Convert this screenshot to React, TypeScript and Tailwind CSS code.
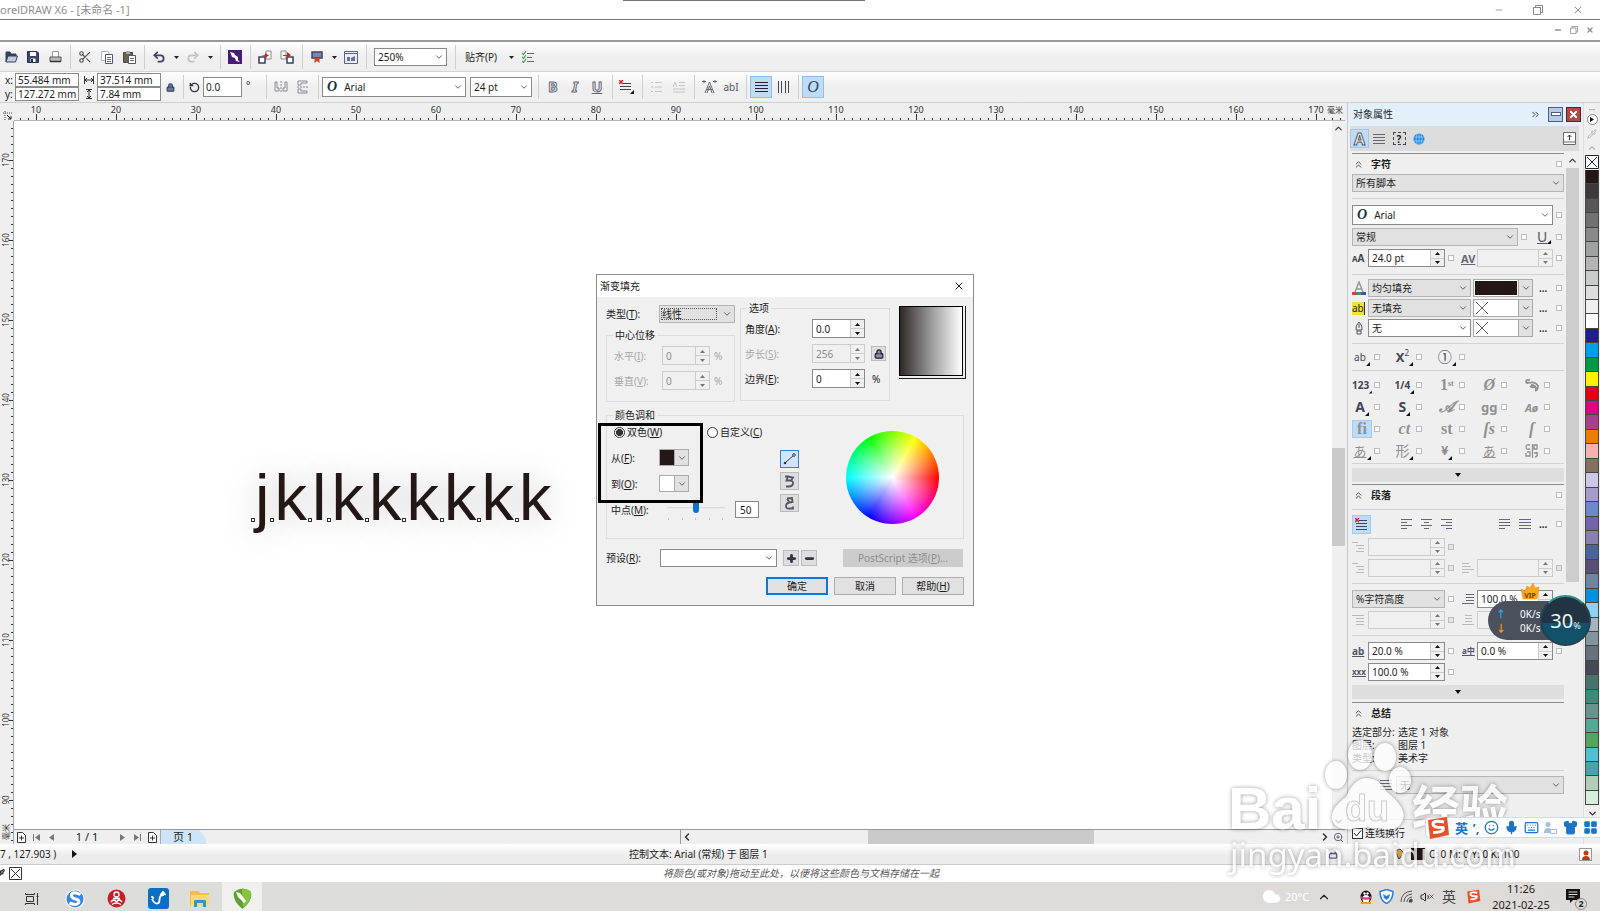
import type { ReactNode } from 'react'
import {
  ChevronDown,
  ChevronLeft,
  ChevronRight,
  ChevronUp,
  ChevronsRight,
  ChevronsUp,
  ClipboardPaste,
  Cloud,
  Copy,
  FolderOpen,
  Keyboard,
  LayoutGrid,
  Lock,
  Mic,
  Minus,
  Pipette,
  Plus,
  Printer,
  Redo2,
  RotateCcw,
  Save,
  Scissors,
  Shirt,
  Smile,
  Undo2,
  Volume1,
  Wifi,
  X,
  ZoomIn,
} from 'lucide-react'

const palette = [
  '#231815', '#3e3a39', '#595757', '#727171', '#898989', '#9fa0a0', '#b5b5b6', '#c9caca',
  '#dcdddd', '#efefef', '#ffffff', '#1d2088', '#00a0e9', '#009944', '#fff100', '#e60012',
  '#e4007f', '#a9408f', '#ed7d00', '#f5b0b0', '#84725f', '#cfc9e8', '#a59aca', '#6c8ac9',
  '#7464ac', '#8a80b0', '#4a6499', '#594f76', '#6f84a0', '#0091e0', '#8fd0f5', '#a3b3bf',
  '#84949e', '#66737e', '#474a56', '#49736c', '#3d8a76', '#68948d', '#52aa92', '#53a55f',
  '#53c0cf', '#48a3af', '#b3ccb8', '#d6efdb',
]

const inputBase = 'min-w-0 flex-1 bg-transparent px-[3px] outline-none'

function Sep() {
  return (
    <span className="flex h-6 w-2 shrink-0 justify-center">
      <span className="w-px bg-[#cfcfcf]" />
    </span>
  )
}

function Tool({ label, active, children }: { label: string; active?: boolean; children: ReactNode }) {
  return (
    <button
      type="button"
      aria-label={label}
      className={`flex h-[22px] w-[22px] shrink-0 items-center justify-center ${
        active ? 'border border-[#8fc0ea] bg-[#bfdcf5]' : ''
      }`}
    >
      {children}
    </button>
  )
}

function DropArrow() {
  return (
    <button type="button" aria-label="More" className="flex w-3 shrink-0 items-center justify-center">
      <svg width="5" height="3" viewBox="0 0 5 3">
        <path d="M0 0h5L2.5 3z" fill="#222" />
      </svg>
    </button>
  )
}

interface PickProps {
  label: string
  value: string
  className?: string
  white?: boolean
  focused?: boolean
  icon?: ReactNode
}

function Pick({ label, value, className = '', white, focused, icon }: PickProps) {
  return (
    <div
      className={`relative flex items-center border ${
        white ? 'border-[#8a8a8a] bg-white' : 'border-[#b4b4b4] bg-[#e1e1e1]'
      } ${className}`}
    >
      {icon}
      <select
        aria-label={label}
        defaultValue={value}
        className={`min-w-0 flex-1 appearance-none bg-transparent outline-none ${
          focused ? 'ml-px mr-[17px] h-3 border border-dotted border-[#555] leading-[10px]' : 'h-full pl-[3px] pr-3'
        }`}
      >
        <option>{value}</option>
      </select>
      <ChevronDown className="pointer-events-none absolute right-[2px] size-[10px] text-[#444]" strokeWidth={2} />
    </div>
  )
}

interface SpinProps {
  label: string
  value?: string
  disabled?: boolean
  className?: string
}

function Spin({ label, value = '', disabled, className = '' }: SpinProps) {
  return (
    <div
      className={`flex border ${
        disabled ? 'border-[#cccccc] bg-[#f0f0f0] text-[#8c8c8c]' : 'border-[#8a8a8a] bg-white text-[#222]'
      } ${className}`}
    >
      <input aria-label={label} defaultValue={value} disabled={disabled} className={inputBase} />
      <div className="flex w-[14px] flex-col border-l border-[#cccccc] bg-[#f0f0f0]">
        <button type="button" aria-label={`${label} +`} className="flex flex-1 items-center justify-center border-b border-[#cccccc]">
          <svg width="5" height="3" viewBox="0 0 5 3">
            <path d="M0 3h5L2.5 0z" fill={disabled ? '#777' : '#111'} />
          </svg>
        </button>
        <button type="button" aria-label={`${label} -`} className="flex flex-1 items-center justify-center">
          <svg width="5" height="3" viewBox="0 0 5 3">
            <path d="M0 0h5L2.5 3z" fill={disabled ? '#777' : '#111'} />
          </svg>
        </button>
      </div>
    </div>
  )
}

function Sq({ dim }: { dim?: boolean }) {
  return <span className={`size-[6px] shrink-0 border border-[#bdbdbd] ${dim ? 'bg-[#e4e4e4]' : 'bg-white'}`} />
}

function FontMark() {
  return <span className="ml-1 mr-1 font-['Liberation_Serif',serif] text-sm font-bold italic leading-none text-[#12333a]">O</span>
}

// stack of text lines, each one given as [start, end]
function Lines({ rows, color = '#66667a', width = 12 }: { rows: number[][]; color?: string; width?: number }) {
  return (
    <svg width={width} height="12" viewBox="0 0 12 12" shapeRendering="crispEdges">
      {rows.map(([a, b], i) => (
        <path key={i} d={`M${a} ${i * 3 + 1.5}H${b}`} stroke={color} strokeWidth="1" />
      ))}
    </svg>
  )
}

const full = [[0, 12], [0, 12], [0, 12], [0, 12]]
const indent = [[0, 6], [4, 12], [6, 12], [4, 12]]

function Corner() {
  return (
    <svg width="4" height="4" viewBox="0 0 4 4" className="self-end">
      <path d="M4 0v4H0z" fill="#111" />
    </svg>
  )
}

function TitleBars() {
  return (
    <header className="shrink-0 bg-white text-[#8f8f8f]">
      <div className="flex h-5 items-center justify-between border-b border-[#777]">
        <h1 className="text-[11px] leading-4">orelDRAW X6 - [未命名 -1]</h1>
        <div className="flex items-center gap-[29px] pr-4">
          <button type="button" aria-label="Minimize"><Minus className="size-[10px]" strokeWidth={2} /></button>
          <button type="button" aria-label="Restore"><RestoreGlyph size={10} /></button>
          <button type="button" aria-label="Close"><X className="size-3" strokeWidth={2} /></button>
        </div>
      </div>
      <div className="flex h-[22px] items-center justify-end gap-2 border-b-2 border-[#999] pr-[6px]">
        <button type="button" aria-label="Minimize document"><Minus className="size-2" strokeWidth={5} /></button>
        <button type="button" aria-label="Restore document"><RestoreGlyph size={8} /></button>
        <button type="button" aria-label="Close document"><X className="size-[8px]" strokeWidth={4} /></button>
      </div>
    </header>
  )
}

function RestoreGlyph({ size }: { size: number }) {
  return (
    <svg width={size} height={size} viewBox="0 0 10 10" fill="none" stroke="#888">
      <path d="M.5 2.500h7v7h-7zM2.500 2.500v-2h7v7h-2" />
    </svg>
  )
}

function StandardBar() {
  return (
    <div className="flex h-[30px] shrink-0 items-center border-b border-[#d4d4d4] bg-linear-to-b from-white to-[#efefef] to-50% pt-px">
      <Tool label="打开">
        <svg width="13" height="12" viewBox="0 0 13 12"><path d="M1 11V1h4l1 2h5v2" fill="#34405f" stroke="#34405f" /><path d="M1 11l2-6h9.500l-2 6z" fill="#c3cbdc" stroke="#34405f" /></svg>
      </Tool>
      <Tool label="保存">
        <svg width="12" height="12" viewBox="0 0 12 12"><path d="M.5.500h9.500l1.500 1.500v9.500H.5z" fill="#3d486e" stroke="#27304f" /><path d="M3 1h6v4H3zM3.500 7.500h5V11h-5z" fill="#fff" /><path d="M4 8h2v3H4z" fill="#27304f" /></svg>
      </Tool>
      <Tool label="打印">
        <svg width="13" height="12" viewBox="0 0 13 12"><path d="M3.500 6V.5h6V6" fill="#fff" stroke="#999" /><path d="M1 6h11v4.500H1z" fill="#bbb" stroke="#555" /><path d="M1 10.500h11" stroke="#333" strokeWidth="1.500" /></svg>
      </Tool>
      <Sep />
      <Tool label="剪切"><Scissors className="size-[14px] text-[#555]" /></Tool>
      <Tool label="复制">
        <svg width="12" height="13" viewBox="0 0 12 13"><path d="M.5.500h7v9h-7z" fill="#fff" stroke="#b4b8c2" /><path d="M4.500 3.500h7v9h-7z" fill="#fff" stroke="#556" /><path d="M6 6.500h4M6 8.500h4M6 10.500h4" stroke="#667" /></svg>
      </Tool>
      <Tool label="粘贴">
        <svg width="13" height="13" viewBox="0 0 13 13"><path d="M.5 1.500h9v10h-9z" fill="#6b6351" stroke="#4c463c" /><path d="M3 0h4v3H3z" fill="#aaa" /><path d="M5.500 4.500h7v8h-7z" fill="#fff" stroke="#556" /><path d="M7 7.500h4M7 9.500h4" stroke="#667" /></svg>
      </Tool>
      <Sep />
      <Tool label="撤消"><Undo2 className="size-[14px] text-[#3b4463]" strokeWidth={3} /></Tool>
      <DropArrow />
      <Tool label="重做"><Redo2 className="size-[14px] text-[#c4c4c8]" strokeWidth={3} /></Tool>
      <DropArrow />
      <Sep />
      <Tool label="搜索内容">
        <svg width="14" height="14" viewBox="0 0 14 14">
          <path d="M0 0h14v14H0z" fill="#4a1a78" />
          <path d="M2 2l4 1 1 2 3 2v3l2 2-4-1-1-3-3-1-1-3z" fill="#fff" />
        </svg>
      </Tool>
      <Sep />
      <Tool label="导入">
        <svg width="14" height="14" viewBox="0 0 14 14">
          <path d="M8 1h5v8H8z" fill="#fff" stroke="#888" />
          <path d="M1 7h6v6H1z" fill="#fff" stroke="#34405f" strokeWidth="1.5" />
          <path d="M3 5h4V3l4 2.5L7 8V6" fill="#c9251b" />
        </svg>
      </Tool>
      <Tool label="导出">
        <svg width="14" height="14" viewBox="0 0 14 14">
          <path d="M1 1h5v8H1z" fill="#fff" stroke="#888" />
          <path d="M7 7h6v6H7z" fill="#fff" stroke="#34405f" strokeWidth="1.5" />
          <path d="M3 5h4V2l4 3-4 3V6H3z" fill="#c9251b" />
        </svg>
      </Tool>
      <Sep />
      <Tool label="应用程序启动器">
        <svg width="12" height="13" viewBox="0 0 12 13">
          <path d="M1 1h10v6H1z" fill="#7b89a8" stroke="#3c4560" strokeWidth="1.5" />
          <path d="M3.500 7h5v5L6 10l-2.500 2z" fill="#e0401f" />
        </svg>
      </Tool>
      <DropArrow />
      <Tool label="欢迎屏幕">
        <svg width="14" height="13" viewBox="0 0 14 13">
          <path d="M.5.500h13v12H.5z" fill="#e9edf6" stroke="#5b6484" />
          <path d="M1 2.500h12" stroke="#5b6484" />
          <path d="M3 6h3v4H3zM7 7l4-2v5H7z" fill="#6471a3" />
        </svg>
      </Tool>
      <Sep />
      <Pick label="缩放级别" value="250%" white className="ml-1 h-[18px] w-[73px] shrink-0" />
      <span className="w-1" />
      <Sep />
      <button type="button" className="ml-[6px] mr-2 shrink-0">贴齐(P)</button>
      <DropArrow />
      <Tool label="选项">
        <svg width="12" height="12" viewBox="0 0 12 12" fill="none">
          <path d="M0 2l1.500 1.500L4 0M0 6l1.500 1.500L4 4M0 10l1.500 1.500L4 8" stroke="#4c9a4c" strokeWidth="1.200" />
          <path d="M5 2.500h7M5 6.500h5M5 10.500h7" stroke="#667" />
        </svg>
      </Tool>
    </div>
  )
}

function PropertyBar() {
  const field = 'h-[14px] w-16 border border-[#8a8a8a] bg-white px-[2px] outline-none'
  const outline = 'text-sm font-bold text-[#f5f5f5] [-webkit-text-stroke:1px_#667]'
  return (
    <div className="flex h-[31px] shrink-0 items-center border-b border-[#cfcfcf] bg-linear-to-b from-white to-[#efefef] to-50%">
      <div className="flex flex-col pl-[5px]">
        <label className="flex items-center"><span className="w-[10px]">x:</span><input defaultValue="55.484 mm" className={field} /></label>
        <label className="flex items-center"><span className="w-[10px]">y:</span><input defaultValue="127.272 mm" className={field} /></label>
      </div>
      <div className="ml-[5px] flex flex-col">
        <label className="flex items-center gap-[3px]">
          <svg width="10" height="8" viewBox="0 0 10 8" aria-label="宽度"><path d="M.5 0v8M9.500 0v8M1 4h8M3 2L1 4l2 2M7 2l2 2-2 2" fill="none" stroke="#334" /></svg>
          <input defaultValue="37.514 mm" className={field} />
        </label>
        <label className="flex items-center gap-[3px]">
          <svg width="10" height="10" viewBox="0 0 10 10" aria-label="高度"><path d="M2 .5h6M2 9.500h6M5 1v8M3 3l2-2 2 2M3 7l2 2 2-2" fill="none" stroke="#334" /></svg>
          <input defaultValue="7.84 mm" className={field} />
        </label>
      </div>
      <button type="button" aria-label="锁定比率" className="ml-[5px] mr-1"><Lock className="size-[9px] text-[#34405f]" fill="#6a769a" strokeWidth={3} /></button>
      <Sep />
      <label className="flex items-center gap-[3px] pl-[2px]">
        <RotateCcw className="size-[11px] text-[#334]" strokeWidth={3} />
        <input aria-label="旋转角度" defaultValue="0.0" className="h-5 w-[39px] border border-[#8a8a8a] bg-white px-[2px] outline-none" />
      </label>
      <span className="mb-1 ml-1 mr-[10px] w-[6px]">°</span>
      <Sep />
      <Tool label="水平镜像">
        <svg width="14" height="12" viewBox="0 0 14 12" fill="none" stroke="#889"><path d="M7 0v12" strokeDasharray="2 1" /><path d="M1 1v9h4V7H3V1zM13 1v9H9V7h2V1z" /></svg>
      </Tool>
      <Tool label="垂直镜像">
        <svg width="12" height="14" viewBox="0 0 12 14" fill="none" stroke="#889"><path d="M0 7h12" strokeDasharray="2 1" /><path d="M10 1H1v4h3V3h6zM10 13H1V9h3v2h6z" /></svg>
      </Tool>
      <Sep />
      <Pick label="字体列表" value="Arial" white icon={<FontMark />} className="h-5 w-36 shrink-0" />
      <Pick label="字体大小" value="24 pt" white className="ml-1 h-5 w-[62px] shrink-0" />
      <span className="w-[2px]" />
      <Sep />
      <Tool label="粗体"><span className={outline}>B</span></Tool>
      <Tool label="斜体"><span className={`${outline} italic`}>I</span></Tool>
      <Tool label="下划线"><span className={`${outline} underline`}>U</span></Tool>
      <Sep />
      <Tool label="文本对齐">
        <svg width="16" height="14" viewBox="0 0 16 14"><path d="M4 3.500h8M1 6.500h11M1 9.500h11" stroke="#445" /><path d="M0 0l4 4M4 0L0 4" stroke="#d22" strokeWidth="1.500" /><path d="M15 10v4h-4z" fill="#111" /></svg>
      </Tool>
      <Sep />
      <Tool label="项目符号列表">
        <svg width="12" height="12" viewBox="0 0 12 12" stroke="#c4c4c4"><path d="M0 1.500h2M0 6h2M0 10.500h2M4 1.500h7M4 6h7M4 10.500h7" /></svg>
      </Tool>
      <Tool label="首字下沉">
        <svg width="12" height="12" viewBox="0 0 12 12" stroke="#c4c4c4" fill="none"><path d="M0 6l2-5 2 5M6 1.500h6M6 4.500h6M0 8h12M0 11h12" /></svg>
      </Tool>
      <Sep />
      <Tool label="字符格式化">
        <svg width="15" height="14" viewBox="0 0 15 14" fill="none" stroke="#667"><path d="M3 13L7.500 2 12 13M4.500 9.500h6M5 13l2.500-7L10 13" /><path d="M0 1.500h4M11 1.500h4M2 0v3M13 0v3" /></svg>
      </Tool>
      <Tool label="编辑文本"><span className="text-[10px] text-[#556]">abI</span></Tool>
      <Sep />
      <Tool label="水平方向" active><svg width="13" height="12" viewBox="0 0 13 12" stroke="#223"><path d="M0 1.500h13M0 4.500h13M0 7.500h13M0 10.500h13" /></svg></Tool>
      <Tool label="垂直方向"><svg width="13" height="12" viewBox="0 0 13 12" stroke="#445"><path d="M1.500 0v12M4.500 0v12M8.500 0v12M11.500 0v12" /></svg></Tool>
      <Sep />
      <Tool label="交互式 OpenType" active><span className="font-['Liberation_Serif',serif] text-base italic leading-none text-[#2d4468]">O</span></Tool>
    </div>
  )
}

const seq = (n: number) => Array.from({ length: n }, (_, i) => i)

function HorizontalRuler() {
  return (
    <svg className="h-[18px] min-w-0 flex-1" fontSize="9" fill="#333">
      {seq(167).map((i) => (
        <path key={i} d={`M${6.5 + i * 8} ${i % 10 === 2 ? 11 : 15}V17`} stroke="#333" />
      ))}
      {seq(17).map((i) => (
        <text key={i} x={22 + i * 80} y="10" textAnchor="middle">{(i + 1) * 10}</text>
      ))}
      <text x="1313" y="10" fontSize="8">毫米</text>
      <path d="M0 17.500H2000" stroke="#b5b5b5" />
    </svg>
  )
}

function VerticalRuler() {
  return (
    <svg className="h-full w-[14px] shrink-0" fontSize="8" fill="#333">
      {seq(90).map((i) => (
        <path key={i} d={`M${i % 10 === 4 ? 9 : 11} ${7.5 + i * 8}H13`} stroke="#333" />
      ))}
      {seq(9).map((i) => (
        <text key={i} transform={`translate(9 ${39 + i * 80}) rotate(-90)`} textAnchor="middle">{170 - i * 10}</text>
      ))}
      <text transform="translate(9 719) rotate(-90)">毫米</text>
      <path d="M13.500 0V1000" stroke="#a8a8a8" />
    </svg>
  )
}

function Drawing() {
  return (
    <main className="relative min-w-0 flex-1 bg-white">
      <div className="absolute left-[236px] top-[344px] flex items-start font-['Liberation_Sans',sans-serif] text-[65px] leading-none text-[#231815] [text-shadow:0_0_32px_rgba(0,0,0,0.25)]">
        {'jklkkkkkk'.split('').map((c, i) => (
          <span key={i} className="flex">
            <span className="mt-[53px] flex w-[5px] justify-end">
              <span className="size-1 border border-[#333] bg-white" />
            </span>
            <span>{c}</span>
          </span>
        ))}
      </div>
    </main>
  )
}

function PageNav() {
  const nav = 'flex w-[15px] items-center justify-center text-[#666]'
  return (
    <div className="flex h-[15px] shrink-0 border-t border-[#999] bg-[#efefef]">
      <div className="flex flex-[81] items-center border-r border-[#999]">
        <button type="button" aria-label="添加页" className={nav}><AddPage /></button>
        <button type="button" aria-label="第一页" className={nav}>
          <svg width="7" height="7" viewBox="0 0 7 7"><path d="M0 0h1v7H0zM7 0v7L2 3.500z" fill="#777" /></svg>
        </button>
        <button type="button" aria-label="上一页" className={nav}>
          <svg width="5" height="7" viewBox="0 0 5 7"><path d="M5 0v7L0 3.500z" fill="#777" /></svg>
        </button>
        <span className="w-14 text-center text-[11px]">1 / 1</span>
        <button type="button" aria-label="下一页" className={nav}>
          <svg width="5" height="7" viewBox="0 0 5 7"><path d="M0 0v7l5-3.500z" fill="#777" /></svg>
        </button>
        <button type="button" aria-label="最后一页" className={nav}>
          <svg width="7" height="7" viewBox="0 0 7 7"><path d="M6 0h1v7H6zM0 0v7l5-3.500z" fill="#777" /></svg>
        </button>
        <button type="button" aria-label="添加页" className={nav}><AddPage /></button>
        <button type="button" className="flex h-[14px] w-[46px] items-center border-l border-[#aaa] bg-[#cde5f8] pl-3 text-[11px] [clip-path:polygon(0_0,85%_0,100%_60%,100%_100%,0_100%)]">
          页 1
        </button>
      </div>
      <div className="flex flex-[79] items-center justify-between">
        <ChevronLeft className="size-3 text-[#333]" strokeWidth={3} />
        <div className="h-full flex-1"><div className="ml-[28%] h-full w-[36%] bg-[#cacaca]" /></div>
        <ChevronRight className="size-3 text-[#333]" strokeWidth={3} />
      </div>
      <button type="button" aria-label="导航器" className="flex w-[14px] items-center justify-center"><ZoomIn className="size-[11px] text-[#556]" /></button>
    </div>
  )
}

function AddPage() {
  return (
    <svg width="9" height="11" viewBox="0 0 9 11">
      <path d="M.5.500h5l3 3v7h-8zM2 6h5M4.500 3.500v5" fill="#fff" stroke="#333" />
    </svg>
  )
}

function Workspace() {
  return (
    <div className="flex min-w-0 flex-1 flex-col bg-[#efefef] pr-[2px]">
      <div className="flex h-[18px] shrink-0">
        <div className="flex w-[14px] items-end justify-center">
          <svg width="9" height="10" viewBox="0 0 9 10"><path d="M2 0v9M0 2h9" stroke="#444" strokeDasharray="1 1" /><path d="M4 4l4 4M8 5v3H5" stroke="#222" fill="none" /></svg>
        </div>
        <HorizontalRuler />
      </div>
      <div className="flex min-h-0 flex-1">
        <VerticalRuler />
        <div className="flex min-w-0 flex-1 flex-col">
          <div className="flex min-h-0 flex-1">
            <Drawing />
            <div className="flex w-[13px] flex-col items-center bg-[#efefef]">
              <ChevronUp className="mt-[2px] size-[11px] text-[#444]" strokeWidth={3} />
              <div className="w-full flex-1"><div className="h-[46%]" /><div className="h-[98px] bg-[#cacaca]" /></div>
              <ChevronDown className="mb-[2px] size-[11px] text-[#444]" strokeWidth={3} />
            </div>
          </div>
          <PageNav />
        </div>
      </div>
    </div>
  )
}

function Rule({ className = '' }: { className?: string }) {
  return <div className={`h-px shrink-0 bg-[#d3d3d3] ${className}`} />
}

function SectionHead({ title, plain }: { title: string; plain?: boolean }) {
  return (
    <div className="flex h-[21px] shrink-0 items-center border-t border-[#8c8c8c] pl-[1px]">
      <ChevronsUp className="size-[11px] text-[#444]" strokeWidth={2} />
      <h2 className="ml-[7px] flex-1 font-bold">{title}</h2>
      {!plain && <Sq />}
      <span className="w-[2px]" />
    </div>
  )
}

function MoreBar() {
  return (
    <button type="button" aria-label="更多" className="flex h-[14px] shrink-0 items-center justify-center bg-[#dedede]">
      <svg width="6" height="4" viewBox="0 0 6 4"><path d="M0 0h6L3 4z" fill="#111" /></svg>
    </button>
  )
}

function FillRow({ icon, label, value, white, swatch }: { icon: ReactNode; label: string; value: string; white?: boolean; swatch?: boolean }) {
  return (
    <div className="flex h-[18px] items-center">
      <span className="flex w-4 items-center">{icon}</span>
      <Pick label={label} value={value} white={white} className="h-[18px] w-[103px]" />
      <button type="button" aria-label={`${label} 颜色`} className="ml-[2px] flex h-[18px] w-[60px] border border-[#aaa] bg-white">
        <span className="flex flex-1 items-center p-px">
          {swatch ? (
            <span className="h-full w-full bg-[#231815]" />
          ) : (
            <svg width="14" height="14" viewBox="0 0 14 14"><path d="M1 1l12 12M13 1L1 13" stroke="#333" strokeWidth=".8" /></svg>
          )}
        </span>
        <span className="flex h-full w-[14px] items-center justify-center border-l border-[#aaa] bg-[#e1e1e1]">
          <ChevronDown className="size-[10px] text-[#444]" />
        </span>
      </button>
      <button type="button" aria-label={`${label} 设置`} className="ml-[6px] flex-1 text-left font-bold text-[#334]">...</button>
      <Sq />
      <span className="w-[2px]" />
    </div>
  )
}

function Feature({ children, tone = 'dark', corner, active }: { children: ReactNode; tone?: 'dark' | 'light'; corner?: boolean; active?: boolean }) {
  return (
    <div className="flex h-[22px] items-center gap-[2px]">
      <button
        type="button"
        className={`flex h-[18px] w-5 items-center justify-center whitespace-nowrap leading-none ${
          tone === 'dark' ? 'text-[#445]' : 'text-[#909090]'
        } ${active ? 'border border-[#a4cbed] bg-[#bfdcf5]' : ''}`}
      >
        {children}
        {corner && <Corner />}
      </button>
      <Sq />
    </div>
  )
}

function ObjectDocker() {
  const serif = "font-['Liberation_Serif',serif] text-base font-bold"
  return (
    <aside className="flex w-[236px] shrink-0 flex-col border-l border-[#c8c8c8] bg-[#efefef]">
      <div className="flex h-[23px] shrink-0 items-center gap-[3px] bg-[#e3f0fb] pb-px pl-[5px] pr-[2px]">
        <h2 className="flex-1">对象属性</h2>
        <ChevronsRight className="mr-1 size-[11px] text-[#333]" />
        <button type="button" aria-label="折叠" className="flex size-[15px] items-center justify-center border border-[#4c5f80] bg-[#b9cbe4]">
          <span className="h-1 w-[10px] border border-[#4c5f80] bg-white" />
        </button>
        <button type="button" aria-label="关闭" className="flex size-[15px] items-center justify-center border border-[#5a2020] bg-[#b04a48]">
          <X className="size-[11px] text-white" strokeWidth={4} />
        </button>
      </div>
      <div className="ml-[2px] mr-1 flex h-[25px] shrink-0 items-center bg-[#dcdcdc]">
        <button type="button" aria-label="字符" className="flex h-[19px] w-[19px] items-center justify-center border border-[#9cc6ea] bg-[#bfdcf5] text-base font-bold leading-none text-white [-webkit-text-stroke:1px_#556]">A</button>
        <button type="button" aria-label="段落" className="flex w-5 justify-center"><Lines rows={full} /></button>
        <button type="button" aria-label="图文框" className="flex w-5 justify-center">
          <span className="flex size-[13px] items-center justify-center border border-dashed border-[#445] font-bold leading-none">?</span>
        </button>
        <button type="button" aria-label="因特网" className="flex w-5 justify-center">
          <svg width="12" height="12" viewBox="0 0 12 12"><circle cx="6" cy="6" r="5.500" fill="#1787e6" /><path d="M1 4h10M1 8h10M6 .5v11M4 1q-2 5 0 10M8 1q2 5 0 10" stroke="#a5d4fa" strokeWidth=".7" fill="none" /></svg>
        </button>
        <span className="flex-1" />
        <button type="button" aria-label="滚动模式" className="mr-[3px]">
          <svg width="13" height="13" viewBox="0 0 13 13"><path d="M.5.500h12v12H.5zM.5 10h12" fill="#fff" stroke="#667" /><path d="M6.500 3v5M4.500 5l2-2 2 2" stroke="#334" fill="none" /></svg>
        </button>
      </div>
      <div className="mt-[2px] flex min-h-0 flex-1 pl-1">
        <div className="flex w-[212px] shrink-0 flex-col">
          <SectionHead title="字符" />
          <Pick label="脚本类型" value="所有脚本" className="h-[18px] shrink-0" />
          <Rule className="my-[6px]" />
          <div className="flex items-center justify-between pr-[2px]">
            <Pick label="字体列表" value="Arial" white icon={<FontMark />} className="h-5 w-[201px]" />
            <Sq />
          </div>
          <div className="mt-[3px] flex items-center pr-[2px]">
            <Pick label="字体样式" value="常规" className="h-[18px] w-[166px]" />
            <span className="w-[3px]" />
            <Sq />
            <button type="button" aria-label="下划线" className="ml-[10px] flex flex-1 items-center text-sm leading-none text-[#556] underline">U<Corner /></button>
            <Sq />
          </div>
          <div className="mt-[3px] flex items-center pr-[2px]">
            <span className="w-4 font-bold leading-none text-[#445]"><small className="text-[8px]">A</small>A</span>
            <Spin label="字体大小" value="24.0 pt" className="h-[18px] w-[77px]" />
            <span className="w-[3px]" />
            <Sq />
            <span className="ml-[7px] w-[16px] text-[11px] font-bold leading-none text-[#667] underline">AV</span>
            <Spin label="字距调整范围" disabled className="h-[18px] w-[76px]" />
            <span className="flex-1" />
            <Sq />
          </div>
          <Rule className="mb-1 mt-[7px]" />
          <div className="flex flex-col gap-[2px]">
            <FillRow
              label="填充类型"
              value="均匀填充"
              swatch
              icon={<svg width="14" height="15" viewBox="0 0 14 15"><path d="M3 11L7 1l4 10M4.500 8h5" stroke="#999" strokeWidth="1.500" fill="none" /><path d="M0 11h5v3H0z" fill="#d33b5e" /><path d="M5 11h4v3H5z" fill="#3a9a55" /><path d="M9 11h5v3H9z" fill="#3b59b8" /></svg>}
            />
            <FillRow
              label="背景填充类型"
              value="无填充"
              icon={<span className="border-r border-[#333] bg-[#efe23b] leading-[13px]">ab</span>}
            />
            <FillRow
              label="轮廓宽度"
              value="无"
              white
              icon={<svg width="14" height="14" viewBox="0 0 14 14"><path d="M7 1q-4 4-3 8h6q1-4-3-8zM5 10h4v3H5zM7 3v4" fill="#eee" stroke="#556" /></svg>}
            />
          </div>
          <Rule className="mt-[6px]" />
          <div className="grid grid-cols-5 py-[2px]">
            <Feature corner>ab</Feature>
            <Feature corner><b className="text-[13px]">X</b><sup className="text-[8px]">2</sup></Feature>
            <Feature corner><span className="text-[14px]">①</span></Feature>
          </div>
          <Rule />
          <div className="grid grid-cols-5 pb-px pt-[3px]">
            <Feature corner><b>123</b></Feature>
            <Feature corner><b>1/4</b></Feature>
            <Feature tone="light"><span className={serif}>1<sup className="text-[8px]">st</sup></span></Feature>
            <Feature tone="light"><i className={serif}>Ø</i></Feature>
            <Feature tone="light">
              <svg width="14" height="13" viewBox="0 0 14 13" fill="none" stroke="#909090" strokeWidth="1.800"><path d="M5 1Q1 0 1 3q1 2 3 0M4 4q6-2 9 3 0 4-3 5M6 6q5 0 5 5M5 7q2 2 5 1" /></svg>
            </Feature>
            <Feature corner><b className="text-[14px]">A</b></Feature>
            <Feature corner><b className="text-[14px]">S</b></Feature>
            <Feature tone="light"><i className={serif}>𝒜</i></Feature>
            <Feature tone="light"><span className="text-[13px] font-bold">gg</span></Feature>
            <Feature tone="light"><b className="text-[11px] italic">Aø</b></Feature>
            <Feature tone="light" active><span className={serif}>fi</span></Feature>
            <Feature tone="light"><i className={serif}>ct</i></Feature>
            <Feature tone="light"><span className={serif}>st</span></Feature>
            <Feature tone="light"><i className={serif}>ſs</i></Feature>
            <Feature tone="light"><i className={serif}>ſ</i></Feature>
            <Feature tone="light" corner><span className="text-[13px] underline">あ</span></Feature>
            <Feature tone="light" corner><span className="text-[14px]">形</span></Feature>
            <Feature tone="light" corner><b className="text-[12px] line-through">¥</b></Feature>
            <Feature tone="light"><span className="text-[13px] underline">あ</span></Feature>
            <Feature tone="light">
              <svg width="13" height="14" viewBox="0 0 13 14" fill="none" stroke="#909090" strokeWidth="1.300"><path d="M5 1Q1 0 1 3t4 2M2 8h3v4H1V9M7.500 0v14M9 1h3v4H9zM9 9h4M11 8q3 4-1 5" /></svg>
            </Feature>
          </div>
          <Rule className="mb-1" />
          <MoreBar />
          <span className="h-[2px] shrink-0" />
          <SectionHead title="段落" />
          <Rule className="mt-1" />
          <div className="flex h-7 shrink-0 items-center pr-[2px]">
            <button type="button" aria-label="无水平对齐" className="flex size-[19px] items-center justify-center border border-[#a4cbed] bg-[#bfdcf5]">
              <svg width="13" height="13" viewBox="0 0 13 13"><path d="M4 2.500h8M1 5.500h11M1 8.500h11M1 11.500h11" stroke="#445" /><path d="M0 0l4 4M4 0L0 4" stroke="#d22" strokeWidth="1.500" /></svg>
            </button>
            <button type="button" aria-label="左对齐" className="ml-[30px]"><Lines rows={[[0, 11], [0, 6], [0, 11], [0, 6]]} /></button>
            <button type="button" aria-label="居中" className="ml-2"><Lines rows={[[0, 11], [3, 8], [0, 11], [3, 8]]} /></button>
            <button type="button" aria-label="右对齐" className="ml-2"><Lines rows={[[0, 11], [5, 11], [0, 11], [5, 11]]} /></button>
            <button type="button" aria-label="两端对齐" className="ml-[46px]"><Lines rows={[[0, 11], [0, 11], [0, 11], [0, 6]]} /></button>
            <button type="button" aria-label="强制两端对齐" className="ml-2"><Lines rows={full} /></button>
            <button type="button" aria-label="调整间距设置" className="ml-2 flex-1 text-left font-bold">...</button>
            <Sq />
          </div>
          <div className="flex items-center pr-[2px]">
            <span className="w-4"><Lines rows={indent} color="#bbb" /></span>
            <Spin label="左行缩进" disabled className="h-[18px] w-[77px]" />
            <span className="w-[3px]" />
            <Sq dim />
          </div>
          <div className="mt-[3px] flex items-center pr-[2px]">
            <span className="w-4"><Lines rows={indent} color="#bbb" /></span>
            <Spin label="首行缩进" disabled className="h-[18px] w-[77px]" />
            <span className="w-[3px]" />
            <Sq dim />
            <span className="ml-[8px] w-[15px]"><Lines rows={[[0, 7], [0, 9], [0, 12], [0, 7]]} color="#bbb" /></span>
            <Spin label="右行缩进" disabled className="h-[18px] w-[76px]" />
            <span className="flex-1" />
            <Sq dim />
          </div>
          <Rule className="my-[6px]" />
          <div className="flex items-center pr-[2px]">
            <Pick label="垂直间距单位" value="%字符高度" className="h-[18px] w-[93px]" />
            <span className="w-[3px]" />
            <Sq />
            <span className="ml-[8px] w-[15px]"><Lines rows={[[4, 12], [4, 12], [4, 12], [0, 12]]} /></span>
            <Spin label="行间距" value="100.0 %" className="h-[18px] w-[76px]" />
          </div>
          <div className="mt-[3px] flex items-center pr-[2px]">
            <span className="w-4"><Lines rows={[[0, 12], [4, 12], [4, 12], [4, 12]]} color="#bbb" /></span>
            <Spin label="段前间距" disabled className="h-[18px] w-[77px]" />
            <span className="w-[3px]" />
            <Sq dim />
            <span className="ml-[8px] w-[15px]"><Lines rows={[[3, 10], [3, 10], [3, 10], [0, 12]]} color="#bbb" /></span>
            <Spin label="段后间距" disabled className="h-[18px] w-[76px]" />
          </div>
          <Rule className="my-[6px]" />
          <div className="flex items-center pr-[2px]">
            <span className="w-4 font-bold leading-none text-[#556] underline">ab</span>
            <Spin label="字符间距" value="20.0 %" className="h-[18px] w-[77px]" />
            <span className="w-[3px]" />
            <Sq />
            <span className="ml-[8px] w-[15px] whitespace-nowrap text-[8px] font-bold leading-none text-[#556] underline">a中</span>
            <Spin label="语言间距" value="0.0 %" className="h-[18px] w-[76px]" />
            <span className="flex-1" />
            <Sq />
          </div>
          <div className="mt-[3px] flex items-center pr-[2px]">
            <span className="w-4 text-[8px] font-bold leading-none text-[#556] underline">xxx</span>
            <Spin label="字间距" value="100.0 %" className="h-[18px] w-[77px]" />
            <span className="w-[3px]" />
            <Sq />
          </div>
          <span className="h-1 shrink-0" />
          <MoreBar />
          <span className="h-[3px] shrink-0" />
          <SectionHead title="总结" plain />
          <dl className="mt-[3px] grid shrink-0 grid-cols-[46px_1fr] leading-[13px]">
            <dt>选定部分:</dt>
            <dd>选定 1 对象</dd>
            <dt>图层:</dt>
            <dd>图层 1</dd>
            <dt>类型:</dt>
            <dd>美术字</dd>
          </dl>
          <Rule className="my-[5px]" />
          <div className="flex items-center pl-[28px]">
            <Lines rows={full} />
            <Pick label="文本换行" value="无" className="ml-1 h-[18px] flex-1" />
          </div>
          <Rule className="mt-[25px]" />
          <label className="mt-[5px] flex h-4 items-center gap-[2px]">
            <input type="checkbox" defaultChecked className="peer sr-only" />
            <span className="flex size-[11px] items-center justify-center border border-[#333] bg-white">
              <svg width="9" height="7" viewBox="0 0 9 7"><path d="M1 3l2.500 3L8 .5" stroke="#222" fill="none" /></svg>
            </span>
            连线换行
          </label>
        </div>
        <div className="ml-[2px] flex w-[13px] flex-col items-center">
          <ChevronUp className="my-[2px] size-[11px] text-[#444]" strokeWidth={3} />
          <div className="h-[414px] w-full bg-[#cdcdcd]" />
        </div>
      </div>
    </aside>
  )
}

function ColorPalette() {
  return (
    <div className="flex w-[17px] shrink-0 flex-col items-center border-l border-[#ddd] bg-[#efefef] pt-[5px]">
      <span className="text-[6px] leading-[4px] text-[#999]">•••</span>
      <button type="button" aria-label="调色板菜单" className="mt-[2px] flex size-[11px] items-center justify-center rounded-full border border-[#888] bg-white">
        <svg width="4" height="5" viewBox="0 0 4 5"><path d="M0 0v5l4-2.500z" fill="#111" /></svg>
      </button>
      <Pipette className="mt-1 size-[10px] text-[#aaa]" />
      <ChevronUp className="mt-1 size-[10px] text-[#bbb]" strokeWidth={3} />
      <button type="button" aria-label="无色" className="mb-px mt-[2px] bg-white">
        <svg width="14" height="14" viewBox="0 0 14 14"><path d="M.5.500h13v13H.5zM2 2l10 10M12 2L2 12" stroke="#222" fill="none" /></svg>
      </button>
      {palette.map((c) => (
        <button key={c} type="button" aria-label={c} className="min-h-0 w-[14px] flex-1 border border-t-0 border-[#444]" style={{ backgroundColor: c }} />
      ))}
      <ChevronDown className="my-[3px] size-[11px] text-[#333]" strokeWidth={3} />
      <span className="h-[22px] shrink-0" />
    </div>
  )
}

function StatusBars() {
  return (
    <footer className="relative shrink-0">
      <div className="flex h-[21px] items-center border-b border-[#ccc] bg-linear-to-b from-white to-[#ececec] to-60%">
        <span className="w-[54px] whitespace-nowrap">7 , 127.903 )</span>
        <button type="button" aria-label="更多" className="ml-[18px]"><svg width="5" height="8" viewBox="0 0 5 8"><path d="M0 0v8l5-4z" fill="#111" /></svg></button>
        <span className="flex-1 pl-[552px]">控制文本: Arial (常规) 于 图层 1</span>
        <div className="flex items-center">
          <Lock className="mr-[56px] size-[10px] text-[#5a648a]" strokeWidth={3} />
          <svg width="12" height="12" viewBox="0 0 12 12"><path d="M1 3l5-2 4 4-5 6z" fill="#e8a63c" stroke="#445" /></svg>
          <span className="ml-[5px] h-3 w-[14px] bg-[#231815]" />
          <span className="ml-1 w-[150px]">C: 0 M: 0 Y: 0 K: 100</span>
          <span className="mr-2 flex size-[13px] items-end justify-center border border-[#999] bg-white">
            <svg width="10" height="10" viewBox="0 0 10 10"><circle cx="5" cy="3" r="2.500" fill="#c23a1a" /><path d="M1 10q0-4 4-4t4 4z" fill="#c23a1a" /></svg>
          </span>
        </div>
      </div>
      <div className="flex h-[17px] items-center bg-white pb-px">
        <Pipette className="-ml-1 size-[9px] text-[#223]" strokeWidth={3} />
        <button type="button" aria-label="无色" className="ml-1">
          <svg width="13" height="13" viewBox="0 0 13 13"><path d="M.5.500h12v12H.5zM2 2l9 9M11 2l-9 9" stroke="#333" fill="none" /></svg>
        </button>
        <p className="flex-1 pr-5 text-center italic text-[#555]">将颜色(或对象)拖动至此处，以便将这些颜色与文档存储在一起</p>
      </div>
    </footer>
  )
}

function SogouMark({ size }: { size: number }) {
  return (
    <svg width={size} height={size} viewBox="0 0 24 24">
      <path d="M2 4l19-3 2 18-19 4z" fill="#e8502a" />
      <path d="M18 6q-11-2-11 2t10 3.500q2 5-10 5" stroke="#fff" strokeWidth="3" fill="none" />
    </svg>
  )
}

function Taskbar() {
  const app = 'flex h-full w-10 items-center justify-center pt-1'
  return (
    <nav className="flex h-[29px] shrink-0 items-center bg-[#dedad8] bg-linear-to-r from-[#dcddda] to-[#dedad8]">
      <button type="button" aria-label="任务视图" className={`${app} ml-3`}>
        <svg width="14" height="12" viewBox="0 0 14 12"><path d="M.5 0v1.500h9V0M1.500 3.500h7v5h-7zM.5 12v-1.500h9V12M12.500 0v12M11.500 3.500h2" stroke="#333" fill="none" /></svg>
      </button>
      <button type="button" aria-label="搜狗浏览器" className={`${app} ml-[3px]`}>
        <svg width="20" height="20" viewBox="0 0 20 20"><circle cx="10" cy="10" r="9.500" fill="#fff" /><circle cx="10" cy="10" r="8.500" fill="#3a86dd" /><path d="M15.500 5.500Q7 1.500 6.500 6.500q0 2.500 4 3.500 4.500 1 3 4-2 3-9 0" stroke="#fff" strokeWidth="3" fill="none" /></svg>
      </button>
      <button type="button" aria-label="网易" className={`${app} ml-px`}>
        <svg width="19" height="19" viewBox="0 0 19 19"><circle cx="9.500" cy="9.500" r="9" fill="#c81e2b" /><path d="M9.500 3a2.500 2.500 0 110 5 2.500 2.500 0 010-5zM6 9.500h7M4 13q3-4 5.500 0 2.500-4 5.500 0M5 15.500q4-3 9 0" stroke="#fff" strokeWidth="1.300" fill="none" /></svg>
      </button>
      <button type="button" aria-label="同步" className={`${app} ml-[2px]`}>
        <svg width="21" height="21" viewBox="0 0 21 21"><rect width="21" height="21" rx="3" fill="#0d6fc4" /><path d="M4 8q0 2 2 2M4 11q2 4.500 5 4.500 2.500 0 2.500-4T15 7V5M12.500 7L15 4l2.500 3" stroke="#fff" strokeWidth="1.800" fill="none" /></svg>
      </button>
      <button type="button" aria-label="文件资源管理器" className={`${app} ml-[2px]`}>
        <svg width="20" height="17" viewBox="0 0 20 17"><path d="M0 1h8l2 2h9v13H0z" fill="#f2bf42" /><path d="M1 5h18v11H1z" fill="#fbd976" /><path d="M4 17v-6q0-1 1-1h10q1 0 1 1v6h-3v-4H7v4z" fill="#3e93c6" /></svg>
      </button>
      <button type="button" aria-label="CorelDRAW" className={`${app} ml-[2px] bg-[#f0f0ef]`}>
        <svg width="19" height="21" viewBox="0 0 19 21"><path d="M1 4q8.500-7 17 0 2 9-8.500 17Q-1 13 1 4z" fill="#5da130" /><path d="M9 1q8 0 9 3 1 9-8 16z" fill="#86c440" /><path d="M3 4l4 1 6 8-2 2-6-6z" fill="#fff" /></svg>
      </button>
      <span className="flex-1" />
      <Cloud className="size-[19px] text-white" fill="#fff" />
      <span className="ml-1 w-8 text-[11px] text-white">20°C</span>
      <ChevronUp className="mr-[28px] size-[14px] text-[#222]" />
      <svg width="14" height="15" viewBox="0 0 14 15"><ellipse cx="7" cy="8" rx="5.500" ry="6.500" fill="#151515" /><ellipse cx="7" cy="10" rx="3.500" ry="4" fill="#fff" /><path d="M2 7q5 3 10 0v2.500q-5 2.500-10 0z" fill="#e62e8b" /><circle cx="5.500" cy="4.500" r="1.200" fill="#fff" /><circle cx="8.500" cy="4.500" r="1.200" fill="#fff" /><path d="M2 14h10" stroke="#f0a020" strokeWidth="2" /></svg>
      <svg className="ml-[6px]" width="15" height="15" viewBox="0 0 15 15"><path d="M7.500.5l6.500 2q0 9-6.500 12Q1 11.500 1 2.500z" fill="#fff" stroke="#2c7ddb" strokeWidth="1.500" /><path d="M4 5l3.500 2L11 5l-1 4-2.500 2L5 9z" fill="#2c7ddb" /></svg>
      <svg className="ml-[6px]" width="13" height="13" viewBox="0 0 13 13" fill="none" stroke="#555"><path d="M1 12Q1 2 12 1M4 12q0-7 8-8M7 12q0-4 5-5" /><path d="M9 12q0-3 3-3v3z" fill="#333" /></svg>
      <span className="ml-[7px] flex items-center"><Volume1 className="size-3 text-[#222]" /><X className="-ml-1 size-[7px]" /></span>
      <span className="ml-[7px] text-[14px] text-[#444]">英</span>
      <span className="ml-[10px]"><SogouMark size={15} /></span>
      <time className="ml-[10px] w-[60px] text-center text-[11px] leading-4">
        11:26
        <br />
        2021-02-25
      </time>
      <button type="button" aria-label="通知" className="relative ml-[15px] mr-[14px]">
        <svg width="20" height="18" viewBox="0 0 20 18"><path d="M0 1h14v11H7l-3 3v-3H0z" fill="#111" /><path d="M2.500 4h9M2.500 6.500h9M2.500 9h6" stroke="#ddd" /></svg>
        <span className="absolute -bottom-1 -right-px size-3 rounded-full border border-[#888] bg-[#ddd] text-[9px] font-bold leading-[10px]">2</span>
      </button>
    </nav>
  )
}

function Field({ text, hot, dim, className = '' }: { text: string; hot: string; dim?: boolean; className?: string }) {
  return (
    <span className={`shrink-0 whitespace-nowrap ${dim ? 'text-[#a8a8a8]' : ''} ${className}`}>
      {text}(<u>{hot}</u>):
    </span>
  )
}

function ColorPick({ label, color }: { label: string; color: string }) {
  return (
    <button type="button" aria-label={label} className="flex h-[17px] w-[30px] border border-[#aaa] bg-[#e1e1e1]">
      <span className="h-full w-[15px] border-r border-[#aaa]" style={{ backgroundColor: color }} />
      <span className="flex h-full flex-1 items-center justify-center"><ChevronDown className="size-[10px] text-[#444]" /></span>
    </button>
  )
}

function GradientDialog() {
  const legend = 'ml-[6px] h-3 px-[2px] leading-3'
  const small = 'flex items-center justify-center border border-[#bbb] bg-[#dedede]'
  return (
    <section
      role="dialog"
      aria-label="渐变填充"
      className="absolute left-[596px] top-[274px] w-[378px] border border-[#8c8c8c] bg-[#f0f0f0] pb-[10px]"
    >
      <div className="flex h-[22px] items-center justify-between bg-white pb-px pl-[3px] pr-2">
        <h2>渐变填充</h2>
        <button type="button" aria-label="关闭"><X className="size-3" strokeWidth={2} /></button>
      </div>

      <div className="flex items-start pl-[9px]">
        <div className="w-[129px] pt-2">
          <div className="flex items-center justify-between">
            <Field text="类型" hot="T" />
            <Pick label="类型" value="线性" focused className="h-[18px] w-[76px]" />
          </div>
          <fieldset className="mt-[6px] h-[73px] border border-[#dcdcdc]">
            <legend className={legend}>中心位移</legend>
            <div className="flex flex-col gap-[6px] pl-[7px] pt-[5px]">
              <div className="flex items-center">
                <Field text="水平" hot="I" dim className="w-12" />
                <Spin label="水平" value="0" disabled className="h-[19px] w-12" />
                <span className="ml-1 text-[#a8a8a8]">%</span>
              </div>
              <div className="flex items-center">
                <Field text="垂直" hot="V" dim className="w-12" />
                <Spin label="垂直" value="0" disabled className="h-[19px] w-12" />
                <span className="ml-1 text-[#a8a8a8]">%</span>
              </div>
            </div>
          </fieldset>
        </div>

        <fieldset className="ml-[5px] mt-[5px] h-[99px] w-[150px] border border-[#dcdcdc]">
          <legend className={legend}>选项</legend>
          <div className="flex flex-col gap-[6px] pl-1 pt-[5px]">
            <div className="flex items-center">
              <Field text="角度" hot="A" className="w-[67px]" />
              <Spin label="角度" value="0.0" className="h-[19px] w-[53px]" />
            </div>
            <div className="flex items-center">
              <Field text="步长" hot="S" dim className="w-[67px]" />
              <Spin label="步长" value="256" disabled className="h-[19px] w-[53px]" />
              <button type="button" aria-label="锁定步长" className={`${small} ml-[6px] size-[15px]`}><Lock className="size-[10px] text-[#223]" fill="#8890a8" strokeWidth={3} /></button>
            </div>
            <div className="flex items-center">
              <Field text="边界" hot="E" className="w-[67px]" />
              <Spin label="边界" value="0" className="h-[19px] w-[53px]" />
              <span className="ml-[7px]">%</span>
            </div>
          </div>
        </fieldset>

        <div className="ml-[9px] mt-[9px] border-b border-r border-[#222] pb-[2px] pr-[2px]">
          <div className="h-[70px] w-[64px] border border-black bg-linear-to-r/srgb from-[#2e2725] via-[#9a9a9a] to-white" />
        </div>
      </div>

      <fieldset className="ml-[9px] mt-[7px] h-[130px] w-[358px] border border-[#dcdcdc]">
        <legend className={legend}>颜色调和</legend>
        <div className="flex">
          <div className="w-[173px] pt-[5px]">
            <div className="flex h-3 items-center pl-[7px]">
              <label className="flex w-[93px] items-center gap-[2px]">
                <input type="radio" name="blend" defaultChecked className="size-[11px] appearance-none rounded-full border border-[#333] bg-white bg-radial from-[#333] from-50% to-white to-60% bg-origin-content" />
                <span>双色(<u>W</u>)</span>
              </label>
              <label className="flex items-center gap-[2px] whitespace-nowrap">
                <input type="radio" name="blend" className="size-[11px] appearance-none rounded-full border border-[#333] bg-white" />
                <span>自定义(<u>C</u>)</span>
              </label>
            </div>
            <div className="mt-[11px] flex h-[17px] items-center pl-1">
              <Field text="从" hot="F" className="w-12" />
              <ColorPick label="从" color="#231815" />
            </div>
            <div className="mt-[9px] flex h-[17px] items-center pl-1">
              <Field text="到" hot="O" className="w-12" />
              <ColorPick label="到" color="#ffffff" />
            </div>
            <div className="mt-[9px] flex h-[17px] items-center pl-1">
              <Field text="中点" hot="M" className="w-14" />
              <input
                type="range"
                aria-label="中点"
                defaultValue={50}
                className="mb-1 h-[10px] w-[58px] appearance-none bg-linear-to-b from-transparent from-35% via-[#d4d4d4] via-40% to-transparent to-60% [&::-webkit-slider-thumb]:h-[10px] [&::-webkit-slider-thumb]:w-[6px] [&::-webkit-slider-thumb]:appearance-none [&::-webkit-slider-thumb]:rounded-b-sm [&::-webkit-slider-thumb]:bg-[#0d73c9]"
              />
              <input aria-label="中点值" defaultValue="50" className="ml-[10px] h-[17px] w-6 border border-[#888] bg-white px-1 outline-none" />
            </div>
            <div className="ml-[61px] flex w-[55px] justify-between">
              {seq(5).map((i) => <span key={i} className="h-[2px] w-px bg-[#bbb]" />)}
            </div>
          </div>
          <div className="flex w-[66px] flex-col gap-1 pt-[29px]">
            <button type="button" aria-label="直线路径" className="flex h-[18px] w-[19px] items-center justify-center border border-[#2a84cf] bg-[#cfe6f9]">
              <svg width="13" height="12" viewBox="0 0 13 12"><path d="M2 10L11 2" stroke="#334" /><circle cx="2" cy="10" r="1.300" fill="#334" /><circle cx="11" cy="2" r="1.300" fill="#fff" stroke="#334" /></svg>
            </button>
            <button type="button" aria-label="逆时针路径" className={`${small} h-[18px] w-[19px]`}>
              <svg width="11" height="13" viewBox="0 0 11 13"><path d="M1 1.500h3L2.500 5.500h4q3 .5 2.500 3-.5 3-4 3H2M4 1.500l5 1-2 3" stroke="#556" strokeWidth="1.800" fill="none" /></svg>
            </button>
            <button type="button" aria-label="顺时针路径" className={`${small} h-[18px] w-[19px]`}>
              <svg width="11" height="13" viewBox="0 0 11 13"><path d="M3 1.500l5-.5.500 4-3 .5Q2 6 2 9t3.500 2.500H9V9.500M3 1.500l2.500 4" stroke="#556" strokeWidth="1.800" fill="none" /></svg>
            </button>
          </div>
          <div className="mt-[10px] size-[93px] rounded-full bg-[radial-gradient(circle,white,transparent_70%),conic-gradient(from_90deg,#f00,#f0f,#00f,#0ff,#0f0,#ff0,#f00)]" />
        </div>
      </fieldset>

      <div className="mt-[10px] flex items-center pl-[9px]">
        <Field text="预设" hot="R" className="w-[54px]" />
        <Pick label="预设" value="" white className="h-[18px] w-[117px]" />
        <button type="button" aria-label="添加预设" className={`${small} ml-[6px] size-4`}><Plus className="size-[11px] text-[#334]" strokeWidth={6} /></button>
        <button type="button" aria-label="删除预设" className={`${small} ml-[2px] size-4`}><Minus className="size-[11px] text-[#334]" strokeWidth={6} /></button>
        <button type="button" disabled className="ml-[26px] h-[18px] w-[120px] bg-[#cccccc] text-[#8c8c8c]">PostScript 选项(<u>P</u>)...</button>
      </div>

      <div className="mt-[10px] flex justify-end gap-[6px] pr-[9px]">
        <button type="button" className="h-[18px] w-[62px] border-2 border-[#0f78d4] bg-[#e1e1e1] leading-[14px]">确定</button>
        <button type="button" className="h-[18px] w-[62px] border border-[#adadad] bg-[#e1e1e1]">取消</button>
        <button type="button" className="h-[18px] w-[62px] border border-[#adadad] bg-[#e1e1e1]">帮助(<u>H</u>)</button>
      </div>

      {/* highlight round the two-colour controls */}
      <div className="pointer-events-none absolute left-px top-[148px] h-[80px] w-[105px] border-[3px] border-black" />
    </section>
  )
}

function NetworkWidget() {
  return (
    <div className="absolute bottom-[265px] right-[9px] flex h-[51px] items-center">
      <div className="-mr-5 flex h-[39px] w-[72px] flex-col justify-center rounded-l-full bg-[#4b515c] pl-[8px] leading-[14px] text-white">
        <span className="flex gap-[14px]"><b className="text-[#27a9ec]">↑</b>0K/s</span>
        <span className="flex gap-[14px]"><b className="text-[#f39a1d]">↓</b>0K/s</span>
      </div>
      <div className="relative flex size-[51px] items-center justify-center rounded-full border-2 border-[#22424f] border-t-[#2e8f8f] bg-linear-to-b from-[#223443] from-55% to-[#12516b] to-55% text-xl leading-none text-[#e8f4f4]">
        30<small className="self-end pb-[14px] text-[9px]">%</small>
      </div>
      <svg className="absolute -top-3 left-[32px]" width="20" height="18" viewBox="0 0 20 18">
        <path d="M1 6l4 2 2-5 3 2 3-5 2 5 4-1-2 12H3z" fill="#f7a81b" stroke="#e98a10" strokeWidth=".5" />
        <text x="10" y="15" fontSize="7" fontWeight="bold" textAnchor="middle" fill="#7a3a00">VIP</text>
      </svg>
    </div>
  )
}

function SogouBar() {
  const icon = 'size-[15px] text-[#1b74c5]'
  return (
    <div className="absolute bottom-[73px] right-0 flex h-[21px] w-[175px] items-center justify-between rounded-l border border-r-0 border-[#ccdcec] bg-white/90 pr-[2px]">
      <SogouMark size={24} />
      <span className="text-[13px] font-bold text-[#1b74c5]">英</span>
      <span className="text-[13px] font-bold text-[#1b74c5]">’,</span>
      <Smile className={icon} />
      <Mic className={icon} fill="#1b74c5" />
      <Keyboard className={icon} />
      <svg width="14" height="14" viewBox="0 0 14 14"><circle cx="4" cy="3.500" r="2.500" fill="#a9bfd6" /><path d="M0 12q0-5 4-5t4 5z" fill="#a9bfd6" /><path d="M6.500 8.500h6v4h-6z" fill="#fff" stroke="#a9bfd6" /></svg>
      <Shirt className={icon} fill="#1b74c5" />
      <LayoutGrid className={icon} fill="#1b74c5" />
    </div>
  )
}

function Watermark() {
  return (
    <svg
      className="pointer-events-none absolute bottom-[26px] right-20 opacity-75 drop-shadow-[0_0_2px_rgba(0,0,0,0.5)]"
      width="300"
      height="155"
      viewBox="0 0 300 155"
      fill="#fff"
    >
      <text x="8" y="99" fontSize="60" fontWeight="bold" fontFamily="Liberation Sans, sans-serif">Bai</text>
      <ellipse cx="116" cy="45" rx="11" ry="14" />
      <ellipse cx="140" cy="25" rx="12" ry="15" />
      <ellipse cx="165" cy="27" rx="11" ry="14" />
      <ellipse cx="180" cy="50" rx="11" ry="13" />
      <path d="M147 48q12 0 20 14 20 16 16 28-5 12-20 9-16-3-30 0-18 2-21-10-2-10 14-22 8-19 21-19z" />
      <text x="147" y="91" fontSize="36" fontWeight="bold" textAnchor="middle" fill="#fff" stroke="#c4c4c4" strokeWidth="1" fontFamily="Liberation Sans, sans-serif">du</text>
      <text x="192" y="95" fontSize="48" fontWeight="bold">经验</text>
      <text x="10" y="137" fontSize="33">jingyan.baidu.com</text>
    </svg>
  )
}

export default function App() {
  return (
    <div className="relative flex h-screen w-full flex-col overflow-hidden bg-[#efefef] font-['Noto_Sans','Noto_Sans_CJK_SC',sans-serif] text-[10px] leading-[14px] text-[#1c1c1c]">
      <TitleBars />
      <StandardBar />
      <PropertyBar />
      <div className="flex min-h-0 flex-1">
        <Workspace />
        <ObjectDocker />
        <ColorPalette />
      </div>
      <StatusBars />
      <Taskbar />

      <div className="absolute left-1/2 top-0 h-px w-[242px] -translate-x-[177px] bg-[#777]" />
      <GradientDialog />
      <NetworkWidget />
      <Watermark />
      <SogouBar />
    </div>
  )
}
